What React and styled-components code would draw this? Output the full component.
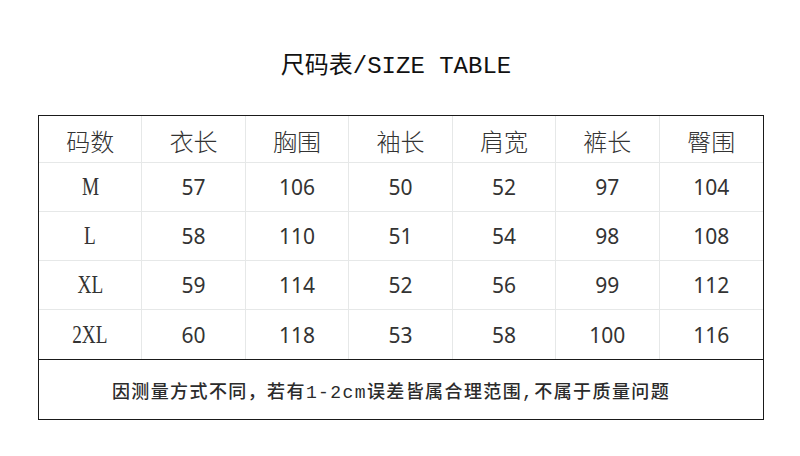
import React from 'react';
import styled, { createGlobalStyle } from 'styled-components';

const GlobalStyle = createGlobalStyle`
  html, body {
    margin: 0;
    padding: 0;
    background: #ffffff;
  }
  body {
    width: 800px;
    height: 456px;
    overflow: hidden;
  }
`;

const Page = styled.div`
  width: 800px;
  height: 456px;
  display: flex;
  flex-direction: column;
  align-items: center;
  background: #fff;
`;

const Title = styled.h1`
  margin: 0 8px 0 0;
  height: 115px;
  display: flex;
  align-items: center;
  padding-top: 10px;
  box-sizing: border-box;
  font-family: "Liberation Mono", "Noto Sans CJK SC", monospace;
  font-weight: 400;
  font-size: 24px;
  color: #111;
`;

const Frame = styled.div`
  width: 726px;
  margin-left: 2px;
  border: 1.5px solid #1a1a1a;
  box-sizing: border-box;
`;

const Grid = styled.div`
  display: grid;
  grid-template-columns: repeat(7, 1fr);
  grid-template-rows: 47px repeat(4, 49px);
  border-bottom: 1.5px solid #1a1a1a;
`;

const Cell = styled.div`
  display: flex;
  align-items: center;
  justify-content: center;
  border-right: ${({ $last }) => ($last ? 'none' : '1px solid #e6e8e8')};
  border-bottom: ${({ $bottom }) => ($bottom ? 'none' : '1px solid #e6e8e8')};
  color: #333;
  font-family: ${({ $kind }) =>
    $kind === 'size'
      ? '"Liberation Serif", serif'
      : $kind === 'head'
      ? '"Noto Sans CJK SC", sans-serif'
      : '"Noto Sans", "Open Sans", sans-serif'};
  font-size: ${({ $kind }) => ($kind === 'head' ? '24px' : $kind === 'size' ? '26px' : '21px')};
  font-weight: ${({ $kind }) => ($kind === 'head' ? 300 : 400)};
  padding-top: ${({ $kind }) => ($kind === 'head' ? '2px' : '0')};
`;

const SizeLabel = styled.span`
  display: inline-block;
  transform: scaleX(0.74);
`;

const Note = styled.div`
  height: 59px;
  display: flex;
  align-items: center;
  justify-content: center;
  font-family: "Liberation Mono", "Noto Sans CJK SC", monospace;
  font-size: 18px;
  font-weight: 500;
  letter-spacing: 1.4px;
  color: #2b2b2b;
  padding-right: 20px;
`;

const headers = ['码数', '衣长', '胸围', '袖长', '肩宽', '裤长', '臀围'];
const rows = [
  ['M', 57, 106, 50, 52, 97, 104],
  ['L', 58, 110, 51, 54, 98, 108],
  ['XL', 59, 114, 52, 56, 99, 112],
  ['2XL', 60, 118, 53, 58, 100, 116],
];

export default function App() {
  return (
    <Page>
      <GlobalStyle />
      <Title>尺码表/SIZE TABLE</Title>
      <Frame>
        <Grid>
          {headers.map((h, i) => (
            <Cell key={h} $kind="head" $last={i === 6}>
              {h}
            </Cell>
          ))}
          {rows.map((r, ri) =>
            r.map((v, ci) => (
              <Cell
                key={`${ri}-${ci}`}
                $kind={ci === 0 ? 'size' : 'num'}
                $last={ci === 6}
                $bottom={ri === rows.length - 1}
              >
                {ci === 0 ? <SizeLabel>{v}</SizeLabel> : v}
              </Cell>
            ))
          )}
        </Grid>
        <Note>因测量方式不同，若有1-2cm误差皆属合理范围,不属于质量问题</Note>
      </Frame>
    </Page>
  );
}
